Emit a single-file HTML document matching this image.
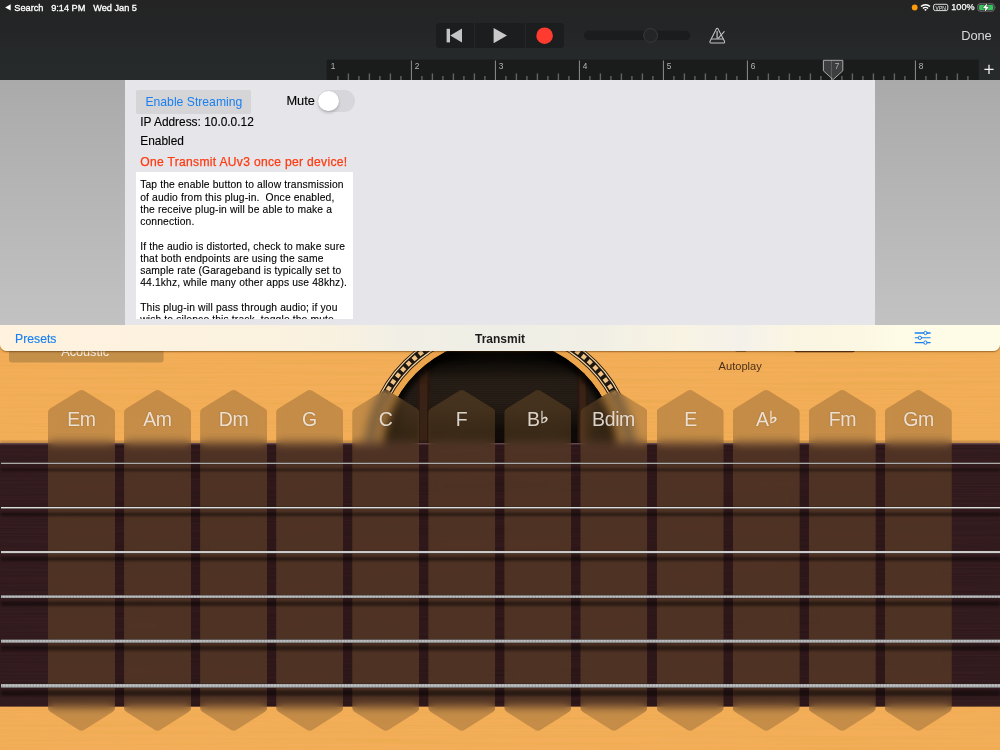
<!DOCTYPE html>
<html lang="en">
<head>
<meta charset="utf-8">
<title>Transmit</title>
<style>
html,body{margin:0;padding:0}
body{width:1000px;height:750px;overflow:hidden;position:relative;background:#b9b9b9;font-family:"Liberation Sans","DejaVu Sans",sans-serif;-webkit-font-smoothing:antialiased}
.abs{position:absolute}
#top,#mid,#bar,#guitar{will-change:transform}
#top{position:absolute;left:0;top:0;width:1000px;height:80px;background:linear-gradient(#242424 0,#242527 30px,#26292a 55px,#272a2b 80px)}
#status{position:absolute;left:0;top:0;width:1000px;height:16px;color:#fff;font-size:9.2px;line-height:16px;-webkit-text-stroke:0.32px #fff;will-change:transform}
#status span{position:absolute;top:-0.4px;white-space:nowrap}
#transport{position:absolute;left:436px;top:23px;width:128px;height:25px;background:#1c1d1e;border-radius:3.5px}
#transport i{position:absolute;top:0;width:1px;height:25px;background:#252728}
#done{position:absolute;left:961.2px;top:28.3px;font-size:12.9px;color:#d9d9d9;line-height:16px;letter-spacing:-0.1px}
#mid{position:absolute;left:0;top:80px;width:1000px;height:245px;background:linear-gradient(#aaaaaa,#c2c2c2)}
#panel{position:absolute;left:125.4px;top:0;width:749.2px;height:245px;background:#e5e5ea}
#btn{position:absolute;left:10.9px;top:9.8px;width:115.2px;height:24.5px;background:#d5d5d7;border-radius:2px;color:#1a7ff0;font-size:12.2px;line-height:24.5px;text-align:center;white-space:nowrap}
.lbl{position:absolute;left:14.9px;font-size:11.9px;line-height:14px;color:#000;white-space:nowrap;-webkit-text-stroke:.12px #000}
#warn{color:#ff3b12;-webkit-text-stroke:0.25px #ff3b12;letter-spacing:0.3px;font-size:12.1px}
#sw{position:absolute;left:192.2px;top:9.7px;width:37.2px;height:22.2px;border-radius:11.1px;background:#d6d6db}
#sw b{position:absolute;left:.9px;top:.9px;width:20.4px;height:20.4px;border-radius:50%;background:#fff;box-shadow:0 2px 3px rgba(0,0,0,.18),0 0 1px rgba(0,0,0,.15)}
#tbox{position:absolute;left:10.8px;top:92.4px;width:216.6px;height:146.7px;background:#fff;overflow:hidden}
#tbox p{margin:0;position:absolute;left:4px;top:7.1px;width:215px;font-size:10.3px;line-height:12.2px;color:#000;white-space:pre;letter-spacing:.14px;-webkit-text-stroke:.1px #000}
#guitar{position:absolute;left:0;top:325px;width:1000px;height:425px;overflow:hidden;background:#f4ae59}
.strip{position:absolute;top:64.2px;width:67px;height:342.4px;background:rgba(125,89,48,.385);-webkit-backdrop-filter:blur(5px);backdrop-filter:blur(5px);clip-path:path('M30.95 1.58 Q33.5 0 36.05 1.58 L64.79 19.43 Q67 20.8 67 23.4 L67 318.6 Q67 321.2 64.8 322.59 L36.04 340.8 Q33.5 342.4 30.96 340.8 L2.2 322.59 Q0 321.2 0 318.6 L0 23.4 Q0 20.8 2.21 19.43 Z');text-align:center}
.strip span{position:absolute;left:0;right:0;top:18.3px;font-size:20.6px;line-height:24px;color:rgba(255,250,242,.82);letter-spacing:-0.35px;white-space:nowrap;transform:scaleX(.945);text-shadow:0 0 1.5px rgba(40,20,0,.35)}
.strip span b{font-weight:normal;display:inline-block;font-size:.8em;transform:scaleX(1.22);position:relative;top:-3.3px;margin-left:1.3px;letter-spacing:0;-webkit-text-stroke:.3px rgba(255,250,242,.82)}
#bar{position:absolute;left:0;top:324.8px;width:1000px;height:26px;clip-path:inset(0 0 -6px 0);border-radius:0 0 6.5px 6.5px;box-shadow:0 .5px 1.6px rgba(70,35,0,.5);
 background:linear-gradient(90deg,#fff3e0 0,#fdf2df 160px,#f9f1e0 330px,#f1efe5 400px,#efeee6 500px,#f1efe5 600px,#f8f3e3 680px,#f4f1ea 740px,#faf5e3 790px,#fbf7e2 860px,#fefbe6 900px,#fefbe6 1000px)}
#bar span{position:absolute;white-space:nowrap;line-height:16px}
#presets{left:15.1px;top:5.8px;font-size:12.2px;color:#1a80f2;-webkit-text-stroke:.15px #1a80f2}
#title{left:0;width:1000px;text-align:center;top:5.5px;font-size:12px;font-weight:bold;color:#1c1c1c}
</style>
</head>
<body>

<!-- ================= guitar ================= -->
<div id="guitar">
<svg class="abs" style="left:0;top:0" width="1000" height="425" viewBox="0 0 1000 425">
<defs>
<filter id="grain" x="0" y="0" width="100%" height="100%">
<feTurbulence type="fractalNoise" baseFrequency="0.004 0.45" numOctaves="3" seed="7" result="n"/>
<feColorMatrix in="n" type="matrix" values="0 0 0 0 0.72  0 0 0 0 0.38  0 0 0 0 0.05  0.7 0 0 0 -0.27"/>
<feComposite operator="in" in2="SourceGraphic"/>
</filter>
<filter id="fgrain" x="0" y="0" width="100%" height="100%">
<feTurbulence type="fractalNoise" baseFrequency="0.003 0.6" numOctaves="2" seed="3" result="n"/>
<feColorMatrix in="n" type="matrix" values="0 0 0 0 0  0 0 0 0 0  0 0 0 0 0  1.1 0 0 0 -0.35"/>
<feComposite operator="in" in2="SourceGraphic"/>
</filter>
<filter id="b1"><feGaussianBlur stdDeviation="1.3"/></filter>
<filter id="b2"><feGaussianBlur stdDeviation="2.2"/></filter>
<radialGradient id="hole" cx="500" cy="132" r="118.5" gradientUnits="userSpaceOnUse">
<stop offset="0" stop-color="#100b08"/><stop offset=".5" stop-color="#120d09"/><stop offset=".8" stop-color="#0b0805"/><stop offset="1" stop-color="#030201"/>
</radialGradient>
<linearGradient id="wood" x1="0" y1="0" x2="0" y2="1">
<stop offset="0" stop-color="#f4ad58"/><stop offset=".3" stop-color="#f4ae59"/><stop offset="1" stop-color="#f4ae59"/>
</linearGradient>
<linearGradient id="brace" x1="0" y1="30" x2="0" y2="150" gradientUnits="userSpaceOnUse"><stop offset="0" stop-color="#2a180d" stop-opacity="0"/><stop offset=".2" stop-color="#2a180d" stop-opacity=".9"/><stop offset="1" stop-color="#2a180d"/></linearGradient>
<linearGradient id="brace2" x1="0" y1="30" x2="0" y2="150" gradientUnits="userSpaceOnUse"><stop offset="0" stop-color="#3a2214" stop-opacity="0"/><stop offset=".25" stop-color="#3a2214" stop-opacity=".9"/><stop offset="1" stop-color="#3a2214"/></linearGradient>
<linearGradient id="back" x1="0" y1="34" x2="0" y2="124" gradientUnits="userSpaceOnUse"><stop offset="0" stop-color="#2e241b" stop-opacity="0"/><stop offset=".25" stop-color="#2e241b" stop-opacity=".8"/><stop offset=".5" stop-color="#2e241b" stop-opacity=".75"/><stop offset=".8" stop-color="#2e241b" stop-opacity="0"/><stop offset="1" stop-color="#2e241b" stop-opacity="0"/></linearGradient>
<pattern id="lines" width="4" height="2.2" patternUnits="userSpaceOnUse"><rect x="0" y="0" width="4" height="1" fill="#000" opacity=".35"/></pattern>
<filter id="b05"><feGaussianBlur stdDeviation=".6"/></filter>
<clipPath id="hc"><circle cx="500" cy="132" r="118.5"/></clipPath>
</defs>
<rect width="1000" height="425" fill="url(#wood)"/>
<rect width="1000" height="425" fill="#fff" filter="url(#grain)"/>
<!-- rosette -->
<g fill="none">
<circle cx="500" cy="132" r="122" stroke="#eda54c" stroke-width="7.5"/>
<circle cx="500" cy="132" r="130.6" stroke="#2e1c0c" stroke-width="11.7"/>
<circle cx="500" cy="132" r="130.6" stroke="#f8dba6" stroke-width="9.8"/>
<circle cx="500" cy="132" r="130.6" stroke="#1f1712" stroke-width="7.5"/>
<circle cx="500" cy="132" r="130.6" stroke="#f0c384" stroke-width="4.4" stroke-dasharray="4.45 3.55"/>
</g>
<!-- sound hole -->
<circle cx="500" cy="132" r="118.5" fill="url(#hole)"/>
<g clip-path="url(#hc)">
<rect x="400" y="34" width="200" height="90" fill="url(#back)"/>
<rect x="400" y="34" width="200" height="90" fill="url(#lines)" opacity=".5"/>
<rect x="417.3" y="30" width="12.4" height="120" fill="url(#brace)" filter="url(#b05)"/>
<rect x="419.6" y="30" width="7.6" height="120" fill="url(#brace2)" filter="url(#b05)"/>
<rect x="577.4" y="30" width="10.6" height="120" fill="url(#brace)" filter="url(#b05)"/>
<rect x="579.4" y="30" width="6.4" height="120" fill="url(#brace2)" filter="url(#b05)"/>
<circle cx="500" cy="132" r="119.5" fill="none" stroke="#000" stroke-width="14" opacity=".75" filter="url(#b2)"/>
</g>
<!-- hidden controls peeking under the bar -->
<rect x="9" y="10" width="154.6" height="27.6" rx="3" fill="#c48f49"/>
<text x="61.2" y="31" font-size="12.7" fill="#f6eee2">Acoustic</text>
<rect x="734" y="20" width="14" height="6.6" rx="3" fill="#3b2613"/>
<rect x="794" y="20" width="61" height="7.2" rx="2.5" fill="#5a3414"/>
<text x="718.6" y="44.6" font-size="11.1" fill="#4b3019">Autoplay</text>
<!-- fretboard -->
<rect x="0" y="115.6" width="1000" height="6" fill="#000" opacity=".2" filter="url(#b1)"/>
<rect x="0" y="118.1" width="1000" height="263.5" fill="#361d20"/>
<rect x="115" y="118.1" width="9.07" height="263.5" fill="#100" opacity=".13"/><rect x="191.07" y="118.1" width="9.07" height="263.5" fill="#100" opacity=".13"/><rect x="267.14" y="118.1" width="9.07" height="263.5" fill="#100" opacity=".13"/><rect x="343.21" y="118.1" width="9.07" height="263.5" fill="#100" opacity=".13"/><rect x="419.28" y="118.1" width="9.07" height="263.5" fill="#100" opacity=".13"/><rect x="495.35" y="118.1" width="9.07" height="263.5" fill="#100" opacity=".13"/><rect x="571.42" y="118.1" width="9.07" height="263.5" fill="#100" opacity=".13"/><rect x="647.49" y="118.1" width="9.07" height="263.5" fill="#100" opacity=".13"/><rect x="723.56" y="118.1" width="9.07" height="263.5" fill="#100" opacity=".13"/><rect x="799.63" y="118.1" width="9.07" height="263.5" fill="#100" opacity=".13"/><rect x="875.7" y="118.1" width="9.07" height="263.5" fill="#100" opacity=".13"/>
<rect x="0" y="118.1" width="1000" height="263.5" fill="#fff" filter="url(#fgrain)" opacity=".3"/>
<rect x="0" y="118.1" width="1000" height="1.3" fill="#6a4c53"/>
</svg>
<div class="strip" style="left:48px"><span>Em</span></div>
<div class="strip" style="left:124.07px"><span>Am</span></div>
<div class="strip" style="left:200.14px"><span>Dm</span></div>
<div class="strip" style="left:276.21px"><span>G</span></div>
<div class="strip" style="left:352.28px"><span>C</span></div>
<div class="strip" style="left:428.35px"><span>F</span></div>
<div class="strip" style="left:504.42px"><span>B<b>♭</b></span></div>
<div class="strip" style="left:580.49px"><span>Bdim</span></div>
<div class="strip" style="left:656.56px"><span>E</span></div>
<div class="strip" style="left:732.63px"><span>A<b>♭</b></span></div>
<div class="strip" style="left:808.7px"><span>Fm</span></div>
<div class="strip" style="left:884.77px"><span>Gm</span></div>
<svg class="abs" style="left:0;top:0" width="1000" height="425" viewBox="0 0 1000 425">
<defs>
<linearGradient id="sg0" x1="0" y1="0" x2="0" y2="1"><stop offset="0" stop-color="#eeeeee"/><stop offset="1" stop-color="#bdbdbd"/></linearGradient>
<linearGradient id="sg1" x1="0" y1="0" x2="0" y2="1"><stop offset="0" stop-color="#a8aaac"/><stop offset=".4" stop-color="#c2c4c6"/><stop offset="1" stop-color="#9ea0a2"/></linearGradient>
<pattern id="wound" width="3.08" height="6" patternUnits="userSpaceOnUse"><rect x="2" y="0" width="1.08" height="6" fill="#555" opacity=".28"/></pattern>
</defs>
<g filter="url(#b1)"><rect x="1" y="143.6" width="999" height="2.6" fill="#000" opacity="0.45"/>
<rect x="1" y="187.65" width="999" height="3.4" fill="#000" opacity="0.45"/>
<rect x="1" y="231.95" width="999" height="4" fill="#000" opacity="0.45"/>
<rect x="1" y="276.35" width="999" height="4.6" fill="#000" opacity="0.45"/>
<rect x="1" y="320.6" width="999" height="5" fill="#000" opacity="0.45"/>
<rect x="1" y="365.2" width="999" height="5.8" fill="#000" opacity="0.45"/></g>
<rect x="1" y="137.4" width="999" height="1.8" fill="#2a221e" opacity=".85"/><rect x="1" y="137.8" width="999" height="1" fill="url(#sg0)"/>
<rect x="1" y="181.6" width="999" height="2.3" fill="#2a221e" opacity=".85"/><rect x="1" y="182" width="999" height="1.5" fill="url(#sg0)"/>
<rect x="1" y="225.75" width="999" height="2.8" fill="#2a221e" opacity=".85"/><rect x="1" y="226.15" width="999" height="2" fill="url(#sg0)"/>
<rect x="1" y="269.95" width="999" height="3.4" fill="#2a221e" opacity=".85"/><rect x="1" y="270.35" width="999" height="2.6" fill="url(#sg1)"/><rect x="1" y="270.35" width="999" height="2.6" fill="url(#wound)"/>
<rect x="1" y="314.25" width="999" height="3.9" fill="#2a221e" opacity=".85"/><rect x="1" y="314.65" width="999" height="3.1" fill="url(#sg1)"/><rect x="1" y="314.65" width="999" height="3.1" fill="url(#wound)"/>
<rect x="1" y="358.6" width="999" height="4.4" fill="#2a221e" opacity=".85"/><rect x="1" y="359" width="999" height="3.6" fill="url(#sg1)"/><rect x="1" y="359" width="999" height="3.6" fill="url(#wound)"/>
</svg>
</div>

<!-- ================= top bar ================= -->
<div id="top">
<div id="status">
<svg class="abs" style="left:0;top:0" width="1000" height="16" viewBox="0 0 1000 16">
<path d="M5.2 7.4 L10.7 4.3 L10.7 10.5 Z" fill="#fff"/>
<circle cx="914.7" cy="7.5" r="2.9" fill="#ff9a0a"/>
<!-- wifi -->
<g fill="none" stroke="#fff" stroke-linecap="butt">
<path d="M921 6.5 A6.4 6.4 0 0 1 930 6.5" stroke-width="1.55"/>
<path d="M922.9 8.45 A3.7 3.7 0 0 1 928.1 8.45" stroke-width="1.5"/>
</g>
<path d="M924.2 9.7 A1.8 1.8 0 0 1 926.8 9.7 L925.5 11 Z" fill="#fff"/>
<!-- vpn -->
<rect x="933.6" y="4.3" width="14.2" height="6.3" rx="1.7" fill="none" stroke="#dedede" stroke-width="1"/>
<text x="935.6" y="9.55" font-size="5.4" fill="#f2f2f2" stroke="none" style="-webkit-text-stroke:.18px #f2f2f2" textLength="10.2" lengthAdjust="spacingAndGlyphs">VPN</text>
<!-- battery -->
<rect x="977.9" y="3.9" width="16.2" height="7.2" rx="1.9" fill="none" stroke="#77797a" stroke-width="1"/>
<rect x="979.1" y="5" width="13.9" height="5" rx=".9" fill="#30c859"/>
<path d="M995.3 6.2 Q996.5 7.5 995.3 8.8 Z" fill="#77797a"/>
<path d="M987.2 2.9 L982.7 8.2 L985.4 8.2 L984.6 12.1 L989.1 6.8 L986.4 6.8 Z" fill="#fff" stroke="#1f2122" stroke-width=".9" paint-order="stroke"/>
</svg>
<span style="left:14.3px">Search</span><span style="left:51.2px">9:14 PM</span><span style="left:93.2px">Wed Jan 5</span><span style="left:951.3px;top:-0.9px;font-size:9.1px;-webkit-text-stroke:0.25px #fff">100%</span>
</div>
<div id="transport"><i style="left:38px"></i><i style="left:89px"></i>
<svg class="abs" style="left:0;top:0" width="128" height="25" viewBox="0 0 128 25">
<rect x="10.6" y="5.8" width="3.4" height="13.6" fill="#c4c4c4"/><path d="M14.2 12.6 L26 5.6 L26 19.6 Z" fill="#c4c4c4"/>
<path d="M57.6 5 L71 12.6 L57.6 20.2 Z" fill="#c9c9c9"/>
<circle cx="108.6" cy="12.7" r="8.3" fill="#ff3b30"/>
</svg></div>
<svg class="abs" style="left:0;top:0" width="1000" height="80" viewBox="0 0 1000 80">
<rect x="584" y="30.8" width="106.4" height="9.2" rx="4.6" fill="#1b1c1d"/>
<circle cx="650.6" cy="35.4" r="6.9" fill="#232526" stroke="#3b3d3e" stroke-width=".9"/>
<!-- metronome -->
<g fill="none" stroke="#c3c3c3" stroke-width="1.05" stroke-linejoin="round" stroke-linecap="round">
<path d="M716.3 28.9 Q717.2 27.6 718.1 28.9 L724.5 41.3 Q725 43 723.3 43 L711.1 43 Q709.5 43 710 41.3 Z"/>
<path d="M711.6 38.9 L722.9 38.9"/>
<path d="M717.1 31.6 L717.1 38.2" stroke-width="1.2"/>
<path d="M718.2 38.4 L724.2 31.6"/>
</g>
<!-- ruler -->
<rect x="326.7" y="59.7" width="652" height="20.3" fill="#1a1b1b"/>
<rect x="337.2" y="76" width="1.4" height="4" fill="#626464"/>
<rect x="347.7" y="73.4" width="1.4" height="6.6" fill="#626464"/>
<rect x="358.2" y="76" width="1.4" height="4" fill="#626464"/>
<rect x="368.7" y="73.4" width="1.4" height="6.6" fill="#626464"/>
<rect x="379.2" y="76" width="1.4" height="4" fill="#626464"/>
<rect x="389.7" y="73.4" width="1.4" height="6.6" fill="#626464"/>
<rect x="400.2" y="76" width="1.4" height="4" fill="#626464"/>
<rect x="410.9" y="60.5" width="1" height="19.5" fill="#8e8f8f"/>
<rect x="421.2" y="76" width="1.4" height="4" fill="#626464"/>
<rect x="431.7" y="73.4" width="1.4" height="6.6" fill="#626464"/>
<rect x="442.2" y="76" width="1.4" height="4" fill="#626464"/>
<rect x="452.7" y="73.4" width="1.4" height="6.6" fill="#626464"/>
<rect x="463.2" y="76" width="1.4" height="4" fill="#626464"/>
<rect x="473.7" y="73.4" width="1.4" height="6.6" fill="#626464"/>
<rect x="484.2" y="76" width="1.4" height="4" fill="#626464"/>
<rect x="494.9" y="60.5" width="1" height="19.5" fill="#8e8f8f"/>
<rect x="505.2" y="76" width="1.4" height="4" fill="#626464"/>
<rect x="515.7" y="73.4" width="1.4" height="6.6" fill="#626464"/>
<rect x="526.2" y="76" width="1.4" height="4" fill="#626464"/>
<rect x="536.7" y="73.4" width="1.4" height="6.6" fill="#626464"/>
<rect x="547.2" y="76" width="1.4" height="4" fill="#626464"/>
<rect x="557.7" y="73.4" width="1.4" height="6.6" fill="#626464"/>
<rect x="568.2" y="76" width="1.4" height="4" fill="#626464"/>
<rect x="578.9" y="60.5" width="1" height="19.5" fill="#8e8f8f"/>
<rect x="589.2" y="76" width="1.4" height="4" fill="#626464"/>
<rect x="599.7" y="73.4" width="1.4" height="6.6" fill="#626464"/>
<rect x="610.2" y="76" width="1.4" height="4" fill="#626464"/>
<rect x="620.7" y="73.4" width="1.4" height="6.6" fill="#626464"/>
<rect x="631.2" y="76" width="1.4" height="4" fill="#626464"/>
<rect x="641.7" y="73.4" width="1.4" height="6.6" fill="#626464"/>
<rect x="652.2" y="76" width="1.4" height="4" fill="#626464"/>
<rect x="662.9" y="60.5" width="1" height="19.5" fill="#8e8f8f"/>
<rect x="673.2" y="76" width="1.4" height="4" fill="#626464"/>
<rect x="683.7" y="73.4" width="1.4" height="6.6" fill="#626464"/>
<rect x="694.2" y="76" width="1.4" height="4" fill="#626464"/>
<rect x="704.7" y="73.4" width="1.4" height="6.6" fill="#626464"/>
<rect x="715.2" y="76" width="1.4" height="4" fill="#626464"/>
<rect x="725.7" y="73.4" width="1.4" height="6.6" fill="#626464"/>
<rect x="736.2" y="76" width="1.4" height="4" fill="#626464"/>
<rect x="746.9" y="60.5" width="1" height="19.5" fill="#8e8f8f"/>
<rect x="757.2" y="76" width="1.4" height="4" fill="#626464"/>
<rect x="767.7" y="73.4" width="1.4" height="6.6" fill="#626464"/>
<rect x="778.2" y="76" width="1.4" height="4" fill="#626464"/>
<rect x="788.7" y="73.4" width="1.4" height="6.6" fill="#626464"/>
<rect x="799.2" y="76" width="1.4" height="4" fill="#626464"/>
<rect x="809.7" y="73.4" width="1.4" height="6.6" fill="#626464"/>
<rect x="820.2" y="76" width="1.4" height="4" fill="#626464"/>
<rect x="830.9" y="60.5" width="1" height="19.5" fill="#8e8f8f"/>
<rect x="841.2" y="76" width="1.4" height="4" fill="#626464"/>
<rect x="851.7" y="73.4" width="1.4" height="6.6" fill="#626464"/>
<rect x="862.2" y="76" width="1.4" height="4" fill="#626464"/>
<rect x="872.7" y="73.4" width="1.4" height="6.6" fill="#626464"/>
<rect x="883.2" y="76" width="1.4" height="4" fill="#626464"/>
<rect x="893.7" y="73.4" width="1.4" height="6.6" fill="#626464"/>
<rect x="904.2" y="76" width="1.4" height="4" fill="#626464"/>
<rect x="914.9" y="60.5" width="1" height="19.5" fill="#8e8f8f"/>
<rect x="925.2" y="76" width="1.4" height="4" fill="#626464"/>
<rect x="935.7" y="73.4" width="1.4" height="6.6" fill="#626464"/>
<rect x="946.2" y="76" width="1.4" height="4" fill="#626464"/>
<rect x="956.7" y="73.4" width="1.4" height="6.6" fill="#626464"/>
<rect x="967.2" y="76" width="1.4" height="4" fill="#626464"/>
<!-- playhead -->
<path d="M823.4 60.3 L842.8 60.3 L842.8 70.8 L833.1 79.6 L823.4 70.8 Z" fill="#4c4d4f" fill-opacity=".7" stroke="#b0b0b0" stroke-width=".95" stroke-linejoin="round"/>
<g font-size="8.3" fill="#b4b5b5"><text x="330.7" y="68.8">1</text><text x="414.7" y="68.8">2</text><text x="498.7" y="68.8">3</text><text x="582.7" y="68.8">4</text><text x="666.7" y="68.8">5</text><text x="750.7" y="68.8">6</text><text x="834.7" y="68.8">7</text><text x="918.7" y="68.8">8</text></g>
<path d="M984.4 69.4 L993.6 69.4 M989 64.8 L989 74" stroke="#f2f2f2" stroke-width="1.3"/>
</svg>
<div id="done">Done</div>
</div>

<!-- ================= plug-in panel ================= -->
<div id="mid"><div id="panel">
<div id="btn">Enable Streaming</div>
<div class="lbl" style="left:161px;top:13.5px;font-size:12.8px">Mute</div>
<div id="sw"><b></b></div>
<div class="lbl" style="top:34.6px">IP Address: 10.0.0.12</div>
<div class="lbl" style="top:53.6px">Enabled</div>
<div class="lbl" id="warn" style="top:74.6px">One Transmit AUv3 once per device!</div>
<div id="tbox"><p>Tap the enable button to allow transmission
of audio from this plug-in.  Once enabled,
the receive plug-in will be able to make a
connection.

If the audio is distorted, check to make sure
that both endpoints are using the same
sample rate (Garageband is typically set to
44.1khz, while many other apps use 48khz).

This plug-in will pass through audio; if you
wish to silence this track, toggle the mute</p></div>
</div></div>

<!-- ================= title bar ================= -->
<div id="bar"><span id="presets">Presets</span><span id="title">Transmit</span>
<svg class="abs" style="left:900px;top:0" width="50" height="26" viewBox="0 0 50 26">
<g stroke="#1a80f2" fill="none" stroke-linecap="round">
<path d="M15.2 8 L30.2 8" stroke-width="1.3"/><path d="M15.2 12.8 L30.2 12.8" stroke-width="1.1"/><path d="M15.2 17.6 L30.2 17.6" stroke-width="1.1"/>
<circle cx="25.5" cy="8" r="1.7" fill="#fdfbe6" stroke-width="1"/><circle cx="19.9" cy="12.8" r="1.7" fill="#fdfbe6" stroke-width="1"/><circle cx="25.5" cy="17.6" r="1.7" fill="#fdfbe6" stroke-width="1"/>
</g></svg>
</div>
</body>
</html>
